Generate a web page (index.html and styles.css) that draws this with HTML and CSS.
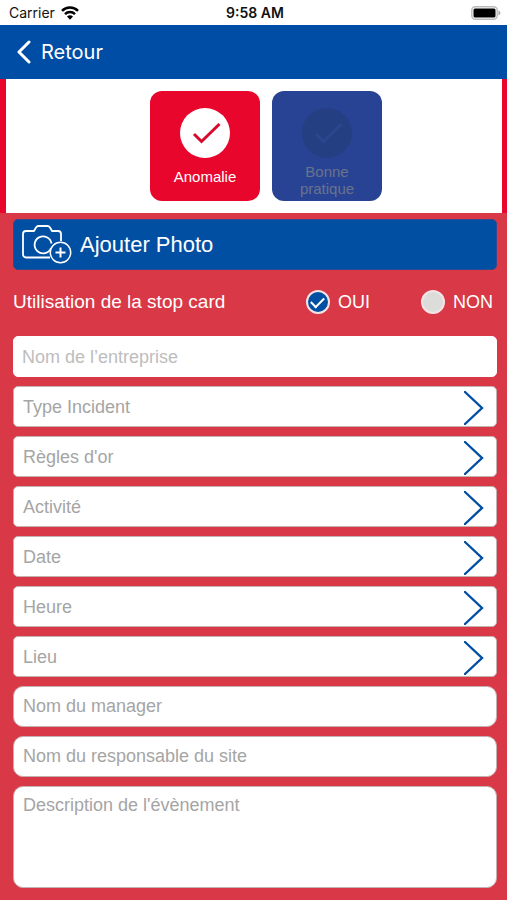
FILE: index.html
```html
<!DOCTYPE html>
<html lang="fr">
<head>
<meta charset="utf-8">
<meta name="viewport" content="width=device-width, initial-scale=1">
<title>Anomalie</title>
<link rel="stylesheet" href="styles.css">
</head>
<body>
<div class="status">
  <div class="carrier"><span>Carrier</span>
    <svg width="18" height="14" viewBox="0 0 18 14" fill="none" stroke="#000" stroke-width="2.5"><path d="M1 4.8a11.5 11.5 0 0 1 16 0M4 8.1a7.2 7.2 0 0 1 10 0"/><path d="M6 10.6a4.3 4.3 0 0 1 6 0L9 13.8Z" fill="#000" stroke="none"/></svg>
  </div>
  <time class="clock">9:58 AM</time>
  <svg class="battery" width="30" height="14" viewBox="0 0 30 14"><rect x=".8" y=".8" width="25.4" height="12.4" rx="3.5" fill="#fff" stroke="#bbb" stroke-width="1.4"/><rect x="2.5" y="2.5" width="22" height="9" rx="1.5"/><path d="M27.5 4.5q2 .8 2 2.5t-2 2.5Z" fill="#aaa"/></svg>
</div>
<header class="nav">
  <a class="back" href="#">
    <svg width="14" height="24" viewBox="0 0 14 24" fill="none" stroke="#fff" stroke-width="3" stroke-linecap="round" stroke-linejoin="round"><path d="M12 2 2 12l10 10"/></svg>
    <span>Retour</span>
  </a>
</header>
<main>
  <section class="kinds">
    <button class="kind kind-on" type="button">
      <svg width="50" height="50" viewBox="0 0 50 50"><circle cx="25" cy="25" r="25" fill="#fff"/><path d="m14 26 7.500 7.500L39.500 16" fill="none" stroke="#d8092d" stroke-width="3"/></svg>
      <span>Anomalie</span>
    </button>
    <button class="kind kind-off" type="button">
      <svg width="50" height="50" viewBox="0 0 50 50"><circle cx="25" cy="25" r="25" fill="#253f83"/><path d="m14 26 7.500 7.500L39.500 16" fill="none" stroke="#2c478e" stroke-width="3"/></svg>
      <span>Bonne pratique</span>
    </button>
  </section>
  <form class="report">
    <button class="photo" type="button">
      <svg width="50" height="39" viewBox="0 0 50 39" fill="none" stroke="#fff" stroke-width="1.800" stroke-linejoin="round"><path d="M28 32.500H4a3 3 0 0 1-3-3V9a3 3 0 0 1 3-3h8l2-3.500Q15 1 16.500 1h9Q27 1 28 2.500L30 6h6a3 3 0 0 1 3 3v7"/><path d="M29 23a8.500 8.500 0 1 1 .500-4.500"/><circle cx="38.500" cy="27.500" r="10.200" stroke-width="1.500"/><path d="M38.500 22.500v10M33.500 27.500h10" stroke-width="2"/></svg>
      <span>Ajouter Photo</span>
    </button>
    <fieldset class="stop">
      <legend class="stop-title">Utilisation de la stop card</legend>
      <label class="choice"><input type="radio" name="stop" checked><span>OUI</span></label>
      <label class="choice"><input type="radio" name="stop"><span>NON</span></label>
    </fieldset>
    <div class="fields">
      <input class="field company" type="text" aria-label="Nom de l’entreprise" placeholder="Nom de l’entreprise">
      <button class="field picker" type="button"><span>Type Incident</span><svg class="chevron" viewBox="0 0 20 34"><path d="M1 1l17 16L1 33"/></svg></button>
      <button class="field picker" type="button"><span>Règles d'or</span><svg class="chevron" viewBox="0 0 20 34"><path d="M1 1l17 16L1 33"/></svg></button>
      <button class="field picker" type="button"><span>Activité</span><svg class="chevron" viewBox="0 0 20 34"><path d="M1 1l17 16L1 33"/></svg></button>
      <button class="field picker" type="button"><span>Date</span><svg class="chevron" viewBox="0 0 20 34"><path d="M1 1l17 16L1 33"/></svg></button>
      <button class="field picker" type="button"><span>Heure</span><svg class="chevron" viewBox="0 0 20 34"><path d="M1 1l17 16L1 33"/></svg></button>
      <button class="field picker" type="button"><span>Lieu</span><svg class="chevron" viewBox="0 0 20 34"><path d="M1 1l17 16L1 33"/></svg></button>
      <input class="field round" type="text" aria-label="Nom du manager" placeholder="Nom du manager">
      <input class="field round" type="text" aria-label="Nom du responsable du site" placeholder="Nom du responsable du site">
      <textarea class="field round notes" aria-label="Description de l'évènement" placeholder="Description de l'évènement"></textarea>
    </div>
  </form>
</main>
</body>
</html>
```
FILE: styles.css
```css
* { box-sizing: border-box; }

body {
  margin: 0;
  min-height: 100vh;
  background: #d93846;
  color: #fff;
  font-family: "Liberation Sans", sans-serif;
}

button, input, textarea { font-family: inherit; margin: 0; }
svg { flex: none; }

.status {
  display: grid;
  grid-template-columns: 1fr auto 1fr;
  align-items: center;
  height: 25px;
  padding: 1px 6px 0 9px;
  background: #fff;
  color: #111;
  font: 14px/20px Inter, sans-serif;
}
.carrier { display: flex; align-items: center; gap: 6px; }
.clock { font-weight: 600; }
.battery { justify-self: end; }

.nav {
  display: flex;
  align-items: center;
  height: 54px;
  padding: 0 17px;
  background: #004da6;
}
.back {
  display: flex;
  align-items: center;
  gap: 10px;
  color: #fff;
  font: 20px/24px Inter, sans-serif;
  text-decoration: none;
}

.kinds {
  display: flex;
  justify-content: center;
  gap: 12px;
  padding: 12px 0 12px 24px;
  margin-bottom: 6px;
  background: #fff;
  border: solid #e8062c;
  border-width: 0 5px 0 6px;
}
.kind {
  display: flex;
  flex-direction: column;
  align-items: center;
  width: 110px;
  height: 110px;
  padding: 17px 16px 0;
  border: 0;
  border-radius: 12px;
  font-size: 15px;
  line-height: 17px;
}
.kind-on { gap: 10px; background: #e8062c; color: #fff; }
.kind-off { gap: 5px; background: #284393; color: #68738c; }

.report { padding: 0 10px 13px 13px; }
.photo {
  display: flex;
  align-items: center;
  gap: 8px;
  width: 100%;
  height: 51px;
  padding: 0 8px;
  border: 1px solid #304a91;
  border-radius: 5px;
  background: #004fa3;
  color: #fff;
  font-size: 22px;
}

.stop {
  display: flex;
  align-items: center;
  height: 66px;
  margin: 0;
  padding: 0 4px 2px 0;
  border: 0;
  font-size: 18px;
}
.stop-title { float: left; flex: 1; padding: 0; font-size: 19px; }
.choice { display: flex; align-items: center; gap: 8px; }
.choice + .choice { margin-left: 51px; }
.choice input {
  appearance: none;
  width: 24px;
  height: 24px;
  margin: 0;
  border: 2px solid #f5e4e6;
  border-radius: 50%;
  background: #dcdcda;
  display: grid;
  place-items: center;
}
.choice input:checked { background: #004fa3; }
.choice input:checked::before {
  content: "";
  width: 11px;
  height: 6px;
  margin-bottom: 3px;
  border: solid #fff;
  border-width: 0 0 2px 2px;
  transform: rotate(-45deg);
}

.fields { display: flex; flex-direction: column; gap: 9px; }
.field {
  width: 100%;
  height: 41px;
  padding: 0 9px;
  border: 1px solid #c6b1b2;
  border-radius: 5px;
  background: #fff;
  color: #a5a5a5;
  font-size: 18px;
  line-height: 20px;
  text-align: left;
}
.field::placeholder { color: #a5a5a5; opacity: 1; }
.company { padding: 2px 8px 0; border-color: #fff; }
.company::placeholder { color: #bdbdbd; }
.picker { display: flex; align-items: center; justify-content: space-between; padding-right: 12px; }
.chevron {
  width: 20px;
  height: 34px;
  margin-top: 3px;
  fill: none;
  stroke: #004fa3;
  stroke-width: 2.4;
  stroke-linecap: round;
}
.round { border-radius: 10px; }
.notes { height: 102px; padding-top: 8px; resize: none; display: block; }
```
